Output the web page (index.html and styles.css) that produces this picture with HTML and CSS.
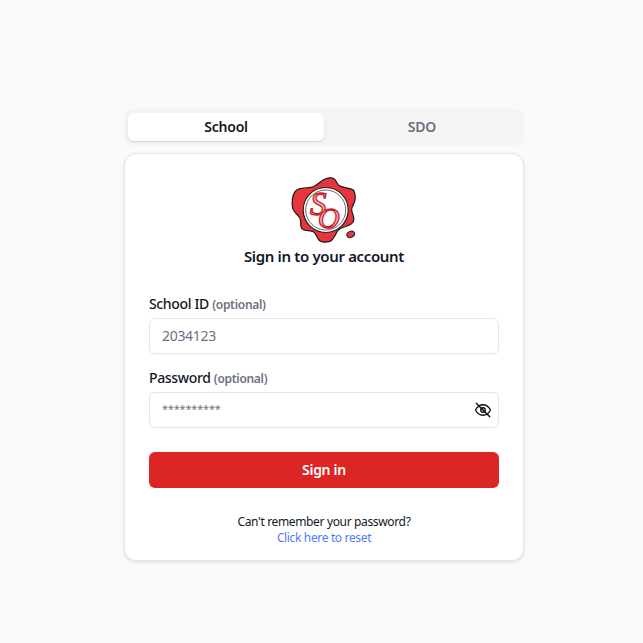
FILE: index.html
```html
<!DOCTYPE html>
<html lang="en">
<head>
  <meta charset="UTF-8" />
  <meta name="viewport" content="width=device-width, initial-scale=1.0" />
  <title>Sign in</title>
  <link rel="stylesheet" href="styles.css">
</head>
<body>

  <main class="login">
    <div class="tabs">
      <button type="button" class="tab tab-active">School</button>
      <button type="button" class="tab">SDO</button>
    </div>

    <section class="card">
      <svg class="logo" viewBox="0 0 70 67" width="70" height="67" aria-hidden="true">
        <path d="M3.300 18 C5 13 9 11.500 11.700 11.300 C16 10.500 20 11 23.300 9.700 C28 8 31 3.500 35 2 C38 0.800 41 0.500 43.300 1.300 C46 2.500 46.500 6 48.300 8 C52 11 59 10.500 63.300 13 C65.500 15.500 65.500 19 65 23 C64.500 27 61.500 29 61.700 33 C62 37 65 40 63.300 44.700 C61.500 48 58 48.500 55 49.700 C52 50.500 50 51 48.300 53 C45.500 56.500 44 62.500 40 64.400 C36 65.500 32.500 65.500 30 64 C27 62 26.500 56.500 23.300 54.700 C19.500 53 14.500 54.500 11.700 51.300 C9.800 49 11.500 44.500 10 41.300 C8.500 38 3.800 35.500 2.700 31.300 C1.800 27 2.200 22 3.300 18 Z" fill="#e8343c" stroke="#1a1a1a" stroke-width="1.200"/>
        <ellipse cx="60.700" cy="57.300" rx="4" ry="3" transform="rotate(-25 60.700 57.300)" fill="#e8343c" stroke="#1a1a1a" stroke-width="1"/>
        <circle cx="35.700" cy="33" r="22.500" fill="#fff" stroke="#222" stroke-width="1.200"/>
        <circle cx="35.700" cy="33" r="20" fill="#fff" stroke="#444" stroke-width="0.800"/>
        <text class="logo-letter" x="20" y="38" font-size="33">S</text>
        <text class="logo-letter" x="28" y="51" font-size="30">O</text>
      </svg>
      <h1 class="title">Sign in to your account</h1>

      <form class="form">
        <div class="field">
          <label class="label" for="school-id">School ID <span class="optional">(optional)</span></label>
          <input class="input" type="text" id="school-id" placeholder="2034123">
        </div>
        <div class="field">
          <label class="label" for="password">Password <span class="optional">(optional)</span></label>
          <div class="input-wrap">
            <input class="input input-password" type="text" id="password" placeholder="**********">
            <svg class="eye" viewBox="0 0 24 24" width="18" height="18" fill="none" stroke="#111" stroke-width="1.800" stroke-linecap="round" stroke-linejoin="round" aria-hidden="true">
              <path d="M2 12s3.600-7 10-7 10 7 10 7-3.600 7-10 7-10-7-10-7Z"/>
              <circle cx="12" cy="12" r="3"/>
              <path d="M3 3l18 18"/>
            </svg>
          </div>
        </div>
        <button type="submit" class="submit">Sign in</button>
      </form>

      <p class="help">
        Can't remember your password?<br>
        <a href="#reset">Click here to reset</a>
      </p>
    </section>
  </main>

</body>
</html>
```

FILE: styles.css
```css
body {
  margin: 0;
  min-height: 643px;
  font-family: "Noto Sans", "Open Sans", sans-serif;
  background-color: #f9fafb;
  color: #111827;
}

.login {
  width: 400px;
  margin: 109px 0 0 124px;
}

.tabs {
  display: flex;
  padding: 4px;
  height: 36px;
  box-sizing: border-box;
  background-color: #f4f4f4;
  border-radius: 8px;
}

.tab {
  flex: 1;
  padding: 0 0 1px;
  border: none;
  border-radius: 6px;
  background: none;
  font-family: inherit;
  font-size: 14px;
  font-weight: 600;
  letter-spacing: -0.2px;
  color: #6b7280;
}

.tab-active {
  background-color: #fff;
  color: #111827;
  box-shadow: 0 1px 2px rgba(0,0,0,0.15);
}

.card {
  margin-top: 8px;
  padding: 23px 24px 16px;
  height: 408px;
  box-sizing: border-box;
  background-color: #fff;
  border: 1px solid #e5e7eb;
  border-radius: 12px;
  box-shadow: 0 1px 3px rgba(0,0,0,0.12);
}

.logo {
  display: block;
  margin-left: 141px;
}

.logo-letter {
  font-family: "Liberation Serif", serif;
  font-style: italic;
  fill: #f7b4b8;
  stroke: #c81e2a;
  stroke-width: 1.300;
}

.title {
  margin: 0;
  font-size: 15px;
  line-height: 24px;
  font-weight: 600;
  letter-spacing: -0.35px;
  text-align: center;
}

.form {
  display: flex;
  flex-direction: column;
  margin-top: 25px;
}

.field {
  margin-bottom: 13px;
}

.label {
  display: block;
  padding-top: 1px;
  margin-bottom: 4px;
  font-size: 14px;
  line-height: 20px;
  font-weight: 500;
  letter-spacing: -0.35px;
}

.optional {
  font-size: 12px;
  line-height: 1;
  font-weight: 600;
  letter-spacing: -0.3px;
  color: #6b7280;
}

.input-wrap {
  position: relative;
}

.input {
  display: block;
  width: 100%;
  height: 36px;
  padding: 0 12px 2px;
  box-sizing: border-box;
  border: 1px solid #e5e7eb;
  border-radius: 6px;
  font-family: inherit;
  font-size: 14px;
  letter-spacing: -0.3px;
  box-shadow: 0 1px 2px rgba(0,0,0,0.04);
}

.input::placeholder {
  color: #6b7280;
}

.input-password {
  padding-bottom: 6px;
}

.input-password::placeholder {
  font-size: 11px;
  letter-spacing: -0.2px;
}

.eye {
  position: absolute;
  right: 7px;
  top: 9px;
}

.submit {
  height: 36px;
  margin-top: 11px;
  padding: 0 0 1px;
  border: none;
  border-radius: 6px;
  background-color: #dc2626;
  color: #fff;
  font-family: inherit;
  font-size: 14px;
  font-weight: 600;
  letter-spacing: -0.3px;
}

.help {
  margin: 26px 0 0;
  font-size: 12px;
  line-height: 16px;
  letter-spacing: -0.35px;
  text-align: center;
}

.help a {
  color: #4f7cf7;
  text-decoration: none;
}
```
